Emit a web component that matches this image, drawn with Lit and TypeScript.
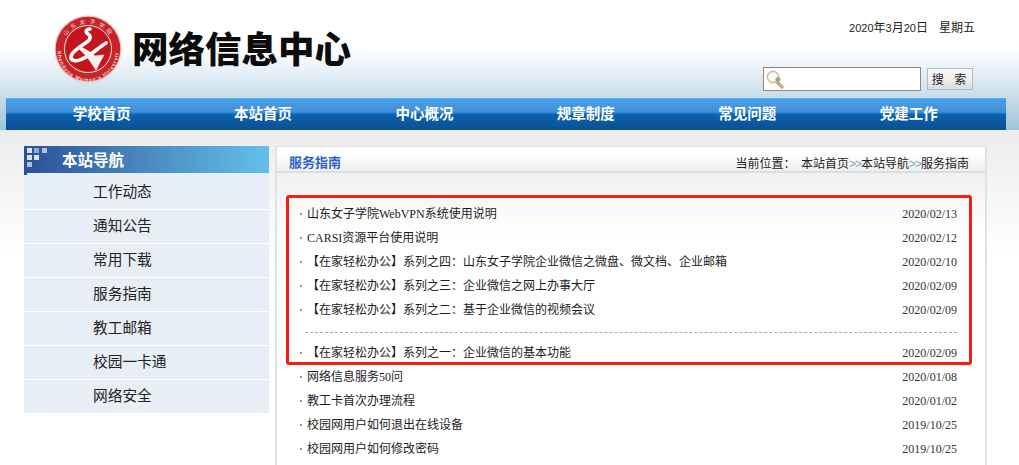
import { LitElement, html, css, svg } from "lit";
import { customElement } from "lit/decorators.js";

const NAV = ["学校首页", "本站首页", "中心概况", "规章制度", "常见问题", "党建工作"];
const SIDE = ["工作动态", "通知公告", "常用下载", "服务指南", "教工邮箱", "校园一卡通", "网络安全"];
const ROWS: [string, string, boolean?][] = [
  ["山东女子学院WebVPN系统使用说明", "2020/02/13"],
  ["CARSI资源平台使用说明", "2020/02/12"],
  ["【在家轻松办公】系列之四：山东女子学院企业微信之微盘、微文档、企业邮箱", "2020/02/10"],
  ["【在家轻松办公】系列之三：企业微信之网上办事大厅", "2020/02/09"],
  ["【在家轻松办公】系列之二：基于企业微信的视频会议", "2020/02/09", true],
  ["【在家轻松办公】系列之一：企业微信的基本功能", "2020/02/09"],
  ["网络信息服务50问", "2020/01/08"],
  ["教工卡首次办理流程", "2020/01/02"],
  ["校园网用户如何退出在线设备", "2019/10/25"],
  ["校园网用户如何修改密码", "2019/10/25"],
];

const logo = svg`<svg width="68" height="68" viewBox="0 0 68 68" aria-hidden="true">
  <defs><path id="top" d="M12 21.25 A25.5 25.5 0 0 1 56 21.25"/><path id="bot" d="M3.5 36 A30.5 30.5 0 0 0 64.5 36"/></defs>
  <circle cx="34" cy="34" r="33.5" fill="#f0c4bf"/>
  <circle cx="34" cy="34" r="32.3" fill="#c5262b"/>
  <circle cx="34" cy="34" r="23.6" fill="none" stroke="#f4d8d2" stroke-width="1"/>
  <circle cx="34" cy="34" r="22" fill="#c3161c"/>
  <text font-size="5.5" fill="#f6e3df" font-family="'Noto Sans CJK SC',sans-serif" letter-spacing="3.7"><textPath href="#top">山东女子学院</textPath></text>
  <text font-size="5" font-weight="700" fill="#f6dcd8" font-family="'Liberation Sans',sans-serif" letter-spacing="0.9"><textPath href="#bot">Shandong Women's University</textPath></text>
  <path d="M36 14 C32 14 31 17 34 19 C37 21 37 24 33 27 C27 31 18 36 17 41 C16 46 22 47 28 44 C36 41 44 33 52 28" fill="none" stroke="#fff" stroke-width="3.6" stroke-linecap="round"/>
  <path d="M27 32 C33 35 38 38 41 41 L50 40 L46 47 L42 55 L36 46 C33 42 29 37 25 34 Z" fill="#fbeeee" stroke="#fff" stroke-width="0.6"/>
</svg>`;

const lens = svg`<svg width="20" height="20" viewBox="0 0 20 20" aria-hidden="true">
  <path d="M11 12 L17 18" stroke="#c8a888" stroke-width="3.4" stroke-linecap="round"/>
  <circle cx="8" cy="8" r="5.6" fill="#fdfdf8" stroke="#d5bd9c" stroke-width="1.6"/>
  <path d="M10.5 10.5h5M13 8v5" stroke="#7fae86" stroke-width="2.4"/>
</svg>`;

const grid = svg`<svg width="23" height="21" viewBox="0 0 23 21" aria-hidden="true" class="grid">
  <rect x="3" y="2" width="5" height="5" fill="#d7e2f1"/><rect x="10" y="2" width="5" height="5" fill="#8ea9d3"/><rect x="18" y="2" width="5" height="5" fill="#aebfdf"/>
  <rect x="3" y="9" width="5" height="5" fill="#d7e2f1"/><rect x="10" y="9" width="5" height="5" fill="#d7e2f1"/>
  <rect x="3" y="16" width="5" height="5" fill="#aebfdf"/>
</svg>`;

@customElement("app-root")
export class AppRoot extends LitElement {
  static styles = css`
    :host { display: block; height: 465px; overflow: hidden; font-family: "Liberation Serif", "Noto Sans CJK SC", serif; color: #222; font-size: 12px;
      background: linear-gradient(#ececec 130px, #fff 260px); }
    .top { height: 130px; background: linear-gradient(#fff 46px, #e8f1f6 70px, #c6dce8 98px, #9dc4da 130px); }
    .head { height: 98px; display: flex; box-sizing: border-box; }
    .logo { margin: 15px 0 0 54px; width: 68px; height: 68px; flex: none; }
    h1 { margin: 25px 0 0 10px; font: 900 36.5px/46px "Noto Sans CJK SC", sans-serif; color: #0c0c0c; white-space: nowrap; flex: none; }
    .tools { margin-left: auto; padding: 19px 44px 0 0; display: flex; flex-direction: column; align-items: flex-end; }
    .date { font: 12px/16px "Noto Sans CJK SC", sans-serif; color: #222; white-space: nowrap; }
    .date b { font: 11px/16px "Liberation Sans", sans-serif; }
    .date .week { margin-left: 11px; }
    .search { margin: 31px 2px 0 0; display: flex; align-items: center; gap: 6px; }
    .box { width: 158px; height: 24px; box-sizing: border-box; border: 1px solid #888; background: #fff; display: flex; align-items: center; padding-left: 1px; }
    .btn { width: 46px; height: 22px; box-sizing: border-box; border: 1px solid #b2bcc6; background: linear-gradient(#f8f8f8, #f0f0f0 50%, #d8dcde); font: 12px/20px "Noto Sans CJK SC", sans-serif; letter-spacing: 4px; text-align: center; padding: 0 0 0 2px; color: #222; }
    nav { margin: 0 13px 0 6px; height: 32px; box-sizing: border-box; border-top: 1px solid #49b2f6; padding-left: 15px; display: flex;
      background: linear-gradient(#4a9fe8, #3f8fd8 42%, #0c62ae 50%, #0a4f92); }
    nav a { width: 161.4px; text-align: center; color: #fff; font: 700 14.5px/28px "Noto Sans CJK SC", sans-serif; }
    .body { display: flex; padding: 16px 32px 0 24px; gap: 6px; align-items: flex-start; }
    aside { width: 245px; flex: none; }
    .stitle { height: 27px; display: flex; align-items: flex-start; background: linear-gradient(90deg, #2b5097, #4a8ac0 50%, #63c0ea); color: #fff; font: 700 15.5px/27px "Noto Sans CJK SC", sans-serif; position: relative; }
    .stitle::after { content: ""; position: absolute; left: 0; bottom: -2px; width: 3px; height: 2px; background: #2b5097; }
    .grid { flex: none; }
    .stitle span { margin-left: 15px; }
    .side { height: 37px; box-sizing: border-box; border-bottom: 1px solid #fff; background: #e8eef6; padding-left: 69px; font: 14.7px/35px "Noto Sans CJK SC", sans-serif; color: #222; }
    .side:nth-child(n+3) { height: 34px; line-height: 29px; }
    main { flex: 1; height: 340px; box-sizing: border-box; border: 2px solid #dde3ec; border-bottom: 0; border-top-width: 1px; background: linear-gradient(#f1f1f1 26px, #fff 90px); }
    .phead { height: 26px; box-sizing: border-box; border-bottom: 2px solid #dadfe6; background: linear-gradient(#fff 30%, #eeeeee); display: flex; align-items: center; justify-content: space-between; padding: 8px 16px 0 12px; }
    .phead b { font: 700 13px/18px "Noto Sans CJK SC", sans-serif; color: #2f62c4; margin-top: -2px; }
    .crumb { font: 12px/18px "Noto Sans CJK SC", sans-serif; color: #222; white-space: pre; }
    .crumb i { font: 12px/18px "Liberation Sans", sans-serif; color: #7f9fc0; letter-spacing: -1px; }
    .list { position: relative; padding: 29px 28px 0 22px; }
    .row { height: 24px; display: flex; justify-content: space-between; align-items: flex-start; line-height: 24px; white-space: nowrap; color: #1c1c1c; }
    .row.sep { height: 43px; position: relative; }
    .row.sep::after { content: ""; position: absolute; left: 6px; right: 0; top: 34px; border-top: 1px dashed #aaa; }
    .title { position: relative; padding-left: 8px; }
    .title::before { content: ""; position: absolute; left: 1px; top: 11px; width: 2px; height: 2px; background: #b08c8c; }
    .d { font: 12px/24px "Liberation Serif", serif; color: #333; }
    .mark { position: absolute; left: 9px; top: 22px; width: 686px; height: 170px; box-sizing: border-box; border: 3px solid #fb1c10; border-radius: 3px; pointer-events: none; }
  `;

  render() {
    return html`
      <div class="top">
        <div class="head">
          <div class="logo">${logo}</div>
          <h1>网络信息中心</h1>
          <div class="tools">
            <div class="date"><b>2020</b>年<b>3</b>月<b>20</b>日<span class="week">星期五</span></div>
            <div class="search">
              <div class="box">${lens}</div>
              <div class="btn">搜 索</div>
            </div>
          </div>
        </div>
        <nav>${NAV.map((n) => html`<a>${n}</a>`)}</nav>
      </div>
      <div class="body">
        <aside>
          <div class="stitle">${grid}<span>本站导航</span></div>
          ${SIDE.map((s) => html`<div class="side">${s}</div>`)}
        </aside>
        <main>
          <div class="phead"><b>服务指南</b><div class="crumb">当前位置：  本站首页<i>&gt;&gt;</i>本站导航<i>&gt;&gt;</i>服务指南</div></div>
          <div class="list">
            ${ROWS.map(([t, d, sep]) => html`<div class="row ${sep ? "sep" : ""}"><span class="title">${t}</span><span class="d">${d}</span></div>`)}
            <div class="mark"></div>
          </div>
        </main>
      </div>`;
  }
}
